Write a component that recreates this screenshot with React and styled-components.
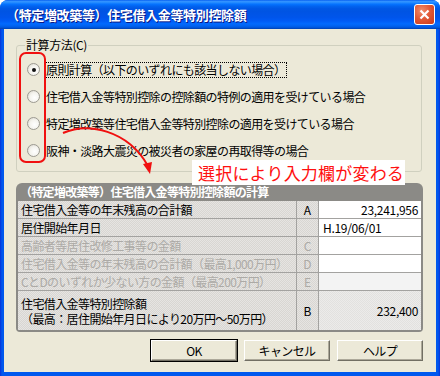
import React from 'react'
import styled, { createGlobalStyle } from 'styled-components'

const Global = createGlobalStyle`
  html, body { margin: 0; padding: 0; background: #fff; }
  body { font-family: "Noto Sans CJK JP", "DejaVu Sans", sans-serif; font-size: 12px; }
`

const options = [
  '原則計算（以下のいずれにも該当しない場合）',
  '住宅借入金等特別控除の控除額の特例の適用を受けている場合',
  '特定増改築等住宅借入金等特別控除の適用を受けている場合',
  '阪神・淡路大震災の被災者の家屋の再取得等の場合',
]

const rows = [
  { label: '住宅借入金等の年末残高の合計額', key: 'A', value: '23,241,956', align: 'right' },
  { label: '居住開始年月日', key: '', value: 'H.19/06/01', align: 'left' },
  { label: '高齢者等居住改修工事等の金額', key: 'C', value: '', off: true },
  { label: '住宅借入金等の年末残高の合計額（最高1,000万円）', key: 'D', value: '', off: true },
  { label: 'CとDのいずれか少ない方の金額（最高200万円）', key: 'E', value: '', off: true, tone: 'light' },
]

const App = () => {
  return (
    <>
      <Global />
      <Window>
        <TitleBar>
          <Title>（特定増改築等）住宅借入金等特別控除額</Title>
          <CloseBtn>
            <svg width="11" height="11" viewBox="0 0 11 11">
              <path d="M1.5 1.5 L9.5 9.5 M9.5 1.5 L1.5 9.5" stroke="#fff" strokeWidth="2.2" />
            </svg>
          </CloseBtn>
        </TitleBar>
        <Frame>
          <Body>
            <Group>
              <Legend>計算方法(C)</Legend>
              {options.map((o, i) => (
                <RadioRow key={i}>
                  <Radio $on={i === 0} />
                  <RadioLabel $focus={i === 0}>{o}</RadioLabel>
                </RadioRow>
              ))}
            </Group>

            <Panel>
              <PanelHead>（特定増改築等）住宅借入金等特別控除額の計算</PanelHead>
              <Grid>
                {rows.map((r, i) => (
                  <React.Fragment key={i}>
                    <LabelCell $off={r.off}>{r.label}</LabelCell>
                    <KeyCell $off={r.off}>{r.key}</KeyCell>
                    <ValueCell $align={r.align} $tone={r.tone}>{r.value}</ValueCell>
                  </React.Fragment>
                ))}
                <TallLabel>
                  <span>住宅借入金等特別控除額</span>
                  <span>（最高：居住開始年月日により20万円～50万円）</span>
                </TallLabel>
                <KeyCell>B</KeyCell>
                <ValueCell $align="right" $tone="dither">232,400</ValueCell>
              </Grid>
            </Panel>

            <Buttons>
              <Button $default>OK</Button>
              <Button>キャンセル</Button>
              <Button>ヘルプ</Button>
            </Buttons>

            <Marker />
            <Arrow width="110" height="60" viewBox="0 0 110 60">
              <path d="M5 9 C 30 -2, 70 6, 90 42" fill="none" stroke="#f01010" strokeWidth="2" />
              <path d="M85 40 L92 50 L94 38 Z" fill="#f01010" />
            </Arrow>
            <Callout>選択により入力欄が変わる</Callout>
          </Body>
        </Frame>
      </Window>
    </>
  )
}

const Window = styled.div`
  width: 440px;
  height: 376px;
  display: flex;
  flex-direction: column;
  background: #0055ea;
  border-radius: 8px 8px 0 0;
  overflow: hidden;
`
const TitleBar = styled.div`
  height: 29px;
  flex: none;
  display: flex;
  align-items: center;
  justify-content: space-between;
  padding: 0 5px 0 6px;
  background: linear-gradient(to bottom, #0058ee 0%, #3593ff 4%, #288eff 8%, #127dff 12%, #036ffc 16%, #0262ee 22%, #0057e5 30%, #0054e3 40%, #0055eb 60%, #005bf5 72%, #026afe 82%, #0062ef 90%, #0052d6 96%, #0040ab 100%);
`
const Title = styled.div`
  color: #fff;
  font-weight: bold;
  font-size: 13px;
  letter-spacing: -0.35px;
  text-shadow: 1px 1px 0 #0a1883;
`
const CloseBtn = styled.div`
  width: 19px;
  height: 19px;
  display: flex;
  align-items: center;
  justify-content: center;
  border: 1px solid #fff;
  border-radius: 3px;
  background: radial-gradient(circle at 35% 30%, #f08d6c 0%, #e25a37 45%, #c8381b 100%);
`
const Frame = styled.div`
  flex: 1;
  display: flex;
  padding: 0 4px 4px;
  background: linear-gradient(to right, #0831d9 0px, #0058ee 2px, #0058ee calc(100% - 2px), #0831d9 100%);
`
const Body = styled.div`
  flex: 1;
  position: relative;
  background: #ece9d8;
  padding: 9px 13px 11px 12px;
  display: flex;
  flex-direction: column;
`
const Group = styled.fieldset`
  margin: 0 1px 0 0;
  padding: 4px 0 7px 10px;
  border: 1px solid #d0d0bf;
  border-radius: 3px;
`
const Legend = styled.legend`
  padding: 0 1px;
  margin-left: -2px;
  line-height: 14px;
  font-size: 12px;
  color: #000;
  letter-spacing: -0.4px;
`
const RadioRow = styled.div`
  height: 27px;
  display: flex;
  align-items: center;
`
const Radio = styled.span`
  width: 11px;
  height: 11px;
  border-radius: 50%;
  border: 1px solid #9c9a92;
  background: radial-gradient(circle at 60% 60%, #ffffff 0%, #f4f3ee 50%, #d4d0c4 100%);
  margin-right: 5px;
  position: relative;
  &::after {
    content: '';
    display: ${p => (p.$on ? 'block' : 'none')};
    position: absolute;
    left: 3.5px;
    top: 3.5px;
    width: 4px;
    height: 4px;
    border-radius: 50%;
    background: #111;
  }
`
const RadioLabel = styled.span`
  line-height: 14px;
  padding: 0 1px;
  letter-spacing: -0.6px;
  outline: ${p => (p.$focus ? '1px dotted #000' : 'none')};
`
const Panel = styled.div`
  margin-top: 11px;
  background: #8b8a86;
  border-radius: 6px 6px 4px 4px;
  padding: 0 2px 2px;
`
const PanelHead = styled.div`
  height: 18px;
  line-height: 18px;
  padding-left: 2px;
  color: #fff;
  font-weight: bold;
  letter-spacing: -0.7px;
`
const Grid = styled.div`
  display: grid;
  grid-template-columns: 278px 21px 1fr;
  grid-template-rows: repeat(5, 17px) 39px;
  gap: 1px;
  background: #a3a2a0;
`
const dither = `repeating-conic-gradient(rgba(255,255,255,0.35) 0 25%, rgba(0,0,0,0) 0 50%) 0 0 / 2px 2px`
const LabelCell = styled.div`
  display: flex;
  align-items: center;
  padding-left: 3px;
  line-height: 14px;
  letter-spacing: -0.6px;
  white-space: nowrap;
  color: ${p => (p.$off ? '#acaaa6' : '#000')};
  background: ${dither}, #d8d6d2;
`
const TallLabel = styled(LabelCell)`
  flex-direction: column;
  justify-content: center;
  align-items: flex-start;
  line-height: 15px;
`
const KeyCell = styled.div`
  display: flex;
  align-items: center;
  justify-content: center;
  color: ${p => (p.$off ? '#acaaa6' : '#000')};
  background: ${dither}, #d8d6d2;
`
const ValueCell = styled.div`
  display: flex;
  align-items: center;
  justify-content: ${p => (p.$align === 'right' ? 'flex-end' : 'flex-start')};
  padding: 0 3px 0 4px;
  letter-spacing: -0.3px;
  background: ${p =>
    p.$tone === 'light' ? '#f3f3f3' : p.$tone === 'dither' ? `${dither}, #e2e1df` : '#fff'};
`
const Buttons = styled.div`
  margin-top: 8px;
  display: flex;
  justify-content: flex-end;
  gap: 7px;
`
const Button = styled.div`
  box-sizing: border-box;
  width: 86px;
  height: 21px;
  display: flex;
  align-items: center;
  justify-content: center;
  letter-spacing: -0.6px;
  background: #ece9d8;
  border: 1px solid;
  border-color: #fff #716f64 #716f64 #fff;
  box-shadow: ${p =>
    p.$default ? '0 0 0 1px #000, inset -1px -1px 0 #aca899' : 'inset -1px -1px 0 #aca899'};
`
const Marker = styled.div`
  position: absolute;
  left: 15px;
  top: 23px;
  width: 23px;
  height: 107px;
  border: 2px solid #f01010;
  border-radius: 7px;
`
const Arrow = styled.svg`
  position: absolute;
  left: 54px;
  top: 95px;
`
const Callout = styled.div`
  position: absolute;
  left: 188px;
  top: 131px;
  width: 213px;
  height: 25px;
  background: #fff;
  color: #ff1010;
  font-size: 17px;
  line-height: 25px;
  padding-left: 6px;
  letter-spacing: 0.2px;
  box-sizing: border-box;
`

export default App
